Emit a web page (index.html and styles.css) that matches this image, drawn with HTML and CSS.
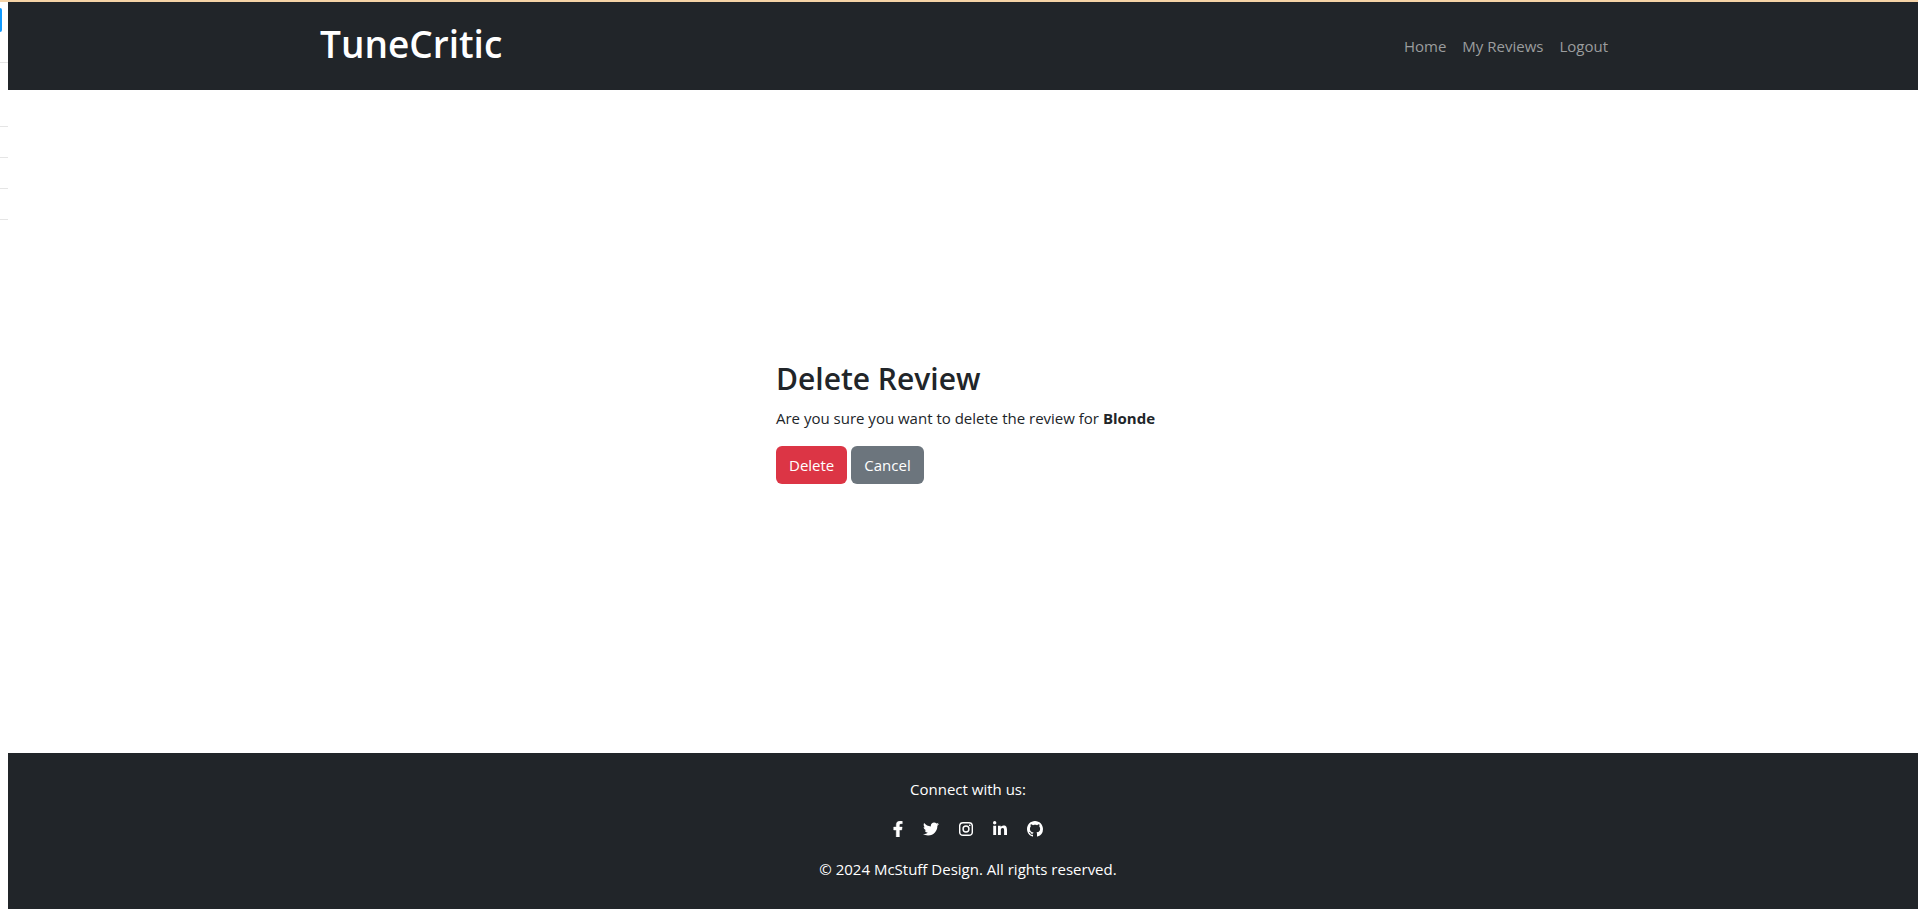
FILE: index.html
```html
<!DOCTYPE html>
<html lang="en">
<head>
<meta charset="utf-8">
<title>TuneCritic</title>
<link rel="stylesheet" href="styles.css">
</head>
<body>
<div class="shell">
  <div class="rail">
    <span class="rail-tab"></span>
    <span class="rail-head"></span>
    <span class="rail-gap"></span>
    <span class="rail-row"></span>
    <span class="rail-row"></span>
    <span class="rail-row"></span>
  </div>
  <div class="page">
    <header class="header">
      <div class="container">
        <h1 class="brand">TuneCritic</h1>
        <nav class="nav">
          <a class="nav-link" href="#">Home</a>
          <a class="nav-link" href="#">My Reviews</a>
          <a class="nav-link" href="#">Logout</a>
        </nav>
      </div>
    </header>
    <main class="main">
      <form class="confirm">
        <h2 class="title">Delete Review</h2>
        <p class="message">Are you sure you want to delete the review for <strong>Blonde</strong></p>
        <div class="actions">
          <button class="btn btn-danger" type="submit">Delete</button>
          <a class="btn btn-secondary" href="#">Cancel</a>
        </div>
      </form>
    </main>
    <footer class="footer">
      <p class="footer-text">Connect with us:</p>
      <div class="social">
        <a href="#" aria-label="Facebook"><svg class="icon" viewBox="0 0 320 512" width="10" height="16"><path d="M279.14 288l14.22-92.66h-88.91v-60.13c0-25.35 12.42-50.06 52.24-50.06h40.42V6.26S260.43 0 225.36 0c-73.22 0-121.08 44.38-121.08 124.72v70.62H22.89V288h81.39v224h100.17V288z" stroke="currentColor" stroke-width="14"/></svg></a>
        <a href="#" aria-label="Twitter"><svg class="icon" viewBox="0 0 512 512" width="16" height="16"><path d="M459.37 151.716c.325 4.548.325 9.097.325 13.645 0 138.72-105.583 298.558-298.558 298.558-59.452 0-114.68-17.219-161.137-47.106 8.447.974 16.568 1.299 25.34 1.299 49.055 0 94.213-16.568 130.274-44.832-46.132-.975-84.792-31.188-98.112-72.772 6.498.974 12.995 1.624 19.818 1.624 9.421 0 18.843-1.3 27.614-3.573-48.081-9.747-84.143-51.98-84.143-102.985v-1.299c13.969 7.797 30.214 12.67 47.431 13.319-28.264-18.843-46.781-51.005-46.781-87.391 0-19.492 5.197-37.36 14.294-52.954 51.655 63.675 129.3 105.258 216.365 109.807-1.624-7.797-2.599-15.918-2.599-24.04 0-57.828 46.782-104.934 104.934-104.934 30.213 0 57.502 12.67 76.67 33.137 23.715-4.548 46.456-13.32 66.599-25.34-7.798 24.366-24.366 44.833-46.132 57.827 21.117-2.273 41.584-8.122 60.426-16.243-14.292 20.791-32.161 39.308-52.628 54.253z"/></svg></a>
        <a href="#" aria-label="Instagram"><svg class="icon" viewBox="0 0 448 512" width="14" height="16"><rect x="22" y="54" width="404" height="404" rx="108" fill="none" stroke="currentColor" stroke-width="46"/><circle cx="224" cy="256" r="94" fill="none" stroke="currentColor" stroke-width="46"/><circle cx="343" cy="136" r="27"/></svg></a>
        <a href="#" aria-label="LinkedIn"><svg class="icon" viewBox="0 0 448 512" width="14" height="16"><path d="M100.28 448H7.4V148.9h92.88zM53.79 108.1C24.09 108.1 0 83.5 0 53.8a53.79 53.79 0 0 1 107.58 0c0 29.7-24.1 54.3-53.79 54.3zM447.9 448h-92.68V302.4c0-34.7-.7-79.2-48.29-79.2-48.29 0-55.69 37.7-55.69 76.7V448h-92.78V148.9h89.08v40.8h1.3c12.4-23.5 42.69-48.3 87.88-48.3 94 0 111.28 61.9 111.28 142.3V448z"/></svg></a>
        <a href="#" aria-label="GitHub"><svg class="icon" viewBox="0 0 16 16" width="16" height="16"><path d="M8 0C3.58 0 0 3.58 0 8c0 3.54 2.29 6.53 5.47 7.59.4.07.55-.17.55-.38 0-.19-.01-.82-.01-1.49-2.01.37-2.53-.49-2.69-.94-.09-.23-.48-.94-.82-1.13-.28-.15-.68-.52-.01-.53.63-.01 1.08.58 1.23.82.72 1.21 1.87.87 2.33.66.07-.52.28-.87.51-1.07-1.78-.2-3.64-.89-3.64-3.95 0-.87.31-1.59.82-2.15-.08-.2-.36-1.02.08-2.12 0 0 .67-.21 2.2.82.64-.18 1.32-.27 2-.27s1.36.09 2 .27c1.53-1.04 2.2-.82 2.2-.82.44 1.1.16 1.92.08 2.12.51.56.82 1.27.82 2.15 0 3.07-1.87 3.75-3.65 3.95.29.25.54.73.54 1.48 0 1.07-.01 1.93-.01 2.2 0 .21.15.46.55.38A8.01 8.01 0 0 0 16 8c0-4.42-3.58-8-8-8"/></svg></a>
      </div>
      <p class="footer-text">© 2024 McStuff Design. All rights reserved.</p>
    </footer>
  </div>
</div>
</body>
</html>
```
FILE: styles.css
```css
*, *::before, *::after { box-sizing: border-box; }

body {
  margin: 0;
  font-family: "Segoe UI", "Open Sans", "Noto Sans", sans-serif;
  font-size: 15px;
  line-height: 24px;
  color: #212529;
  background: #fff;
}

h1, h2, p { margin: 0; }

.shell {
  display: flex;
  min-height: 100vh;
  overflow: hidden;
  border-top: 2px solid #f5d3a6;
}

/* Sliver of the neighbouring panel */
.rail {
  flex: 0 0 8px;
  display: flex;
  flex-direction: column;
  padding-top: 6px;
}
.rail-tab {
  width: 2px;
  height: 24px;
  background: #0d99ff;
  border-radius: 0 2px 2px 0;
}
.rail-head, .rail-gap, .rail-row { border-bottom: 1px solid #e5e5e5; }
.rail-head { height: 31px; }
.rail-gap { height: 64px; }
.rail-row { height: 31px; }

.page {
  flex: 1;
  display: flex;
  flex-direction: column;
  margin-right: -10px;
}

.header {
  padding: 16px 0;
  background: #212529;
}
.container {
  display: flex;
  align-items: center;
  justify-content: space-between;
  max-width: 1320px;
  margin: 0 auto;
  padding: 0 12px;
}
.brand {
  padding-bottom: 4px;
  font-size: 37px;
  font-weight: 600;
  line-height: 52px;
  color: #fff;
}
.nav { display: flex; }
.nav-link {
  padding: 8px;
  color: #9b9d9e;
  text-decoration: none;
}

.main {
  flex: 1;
  display: flex;
  align-items: center;
  justify-content: center;
}
.confirm { min-width: 384px; }
.title {
  margin-bottom: 8px;
  font-size: 30px;
  font-weight: 600;
  line-height: 38px;
}
.message { margin-bottom: 16px; }
.actions { display: flex; gap: 4px; }
.btn {
  padding: 6px 12px;
  border: 1px solid transparent;
  border-radius: 6px;
  font: inherit;
  color: #fff;
  text-decoration: none;
}
.btn-danger { background: #dc3545; }
.btn-secondary { background: #6c757d; }

.footer {
  display: flex;
  flex-direction: column;
  align-items: center;
  gap: 16px;
  padding: 24px 0 28px;
  background: #212529;
  color: #fff;
}
.social {
  display: flex;
  align-items: center;
  gap: 20px;
  height: 24px;
}
.social a { display: flex; color: inherit; }
.icon { fill: currentColor; }
```
